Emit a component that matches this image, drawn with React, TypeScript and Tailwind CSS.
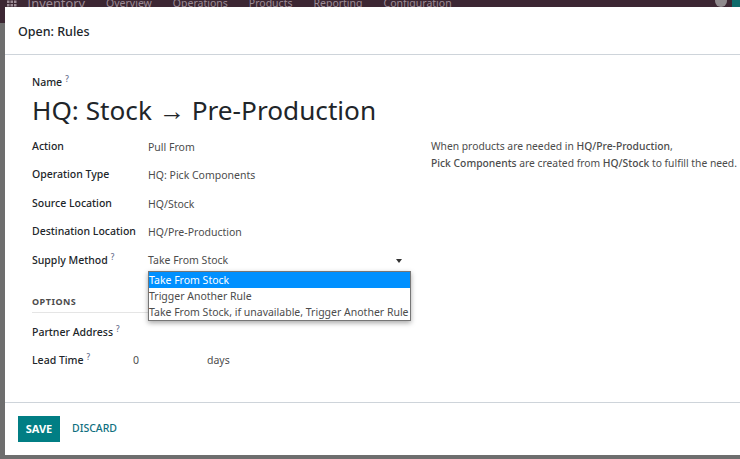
const rows = [
  { label: 'Action', value: 'Pull From', h: 'h-[29px]' },
  { label: 'Operation Type', value: 'HQ: Pick Components', h: 'h-[28px]' },
  { label: 'Source Location', value: 'HQ/Stock', h: 'h-[29px]' },
  { label: 'Destination Location', value: 'HQ/Pre-Production', h: 'h-[28px]' },
];

const options = ['Take From Stock', 'Trigger Another Rule', 'Take From Stock, if unavailable, Trigger Another Rule'];

function Help() {
  return <sup className="ml-[3px] text-[8px] text-[#5f6b8a]">?</sup>;
}

export default function App() {
  return (
    <div className="relative h-[459px] w-[740px] overflow-hidden bg-[#6e6e6e] font-['Noto_Sans',sans-serif] text-[10.5px] text-[#4c4c4c]">
      {/* menu bar behind the dialog */}
      <div className="flex h-[23px] items-start overflow-hidden bg-[#3c2733] text-[#9c8c96]">
        <svg className="ml-[7px] mt-[-3px] shrink-0" width="10" height="10" viewBox="0 0 10 10" fill="#9c8c96">
          <rect x="0" y="0" width="2.5" height="2.5" />
          <rect x="3.5" y="0" width="2.5" height="2.5" />
          <rect x="7" y="0" width="2.5" height="2.5" />
          <rect x="0" y="3.5" width="2.5" height="2.5" />
          <rect x="3.5" y="3.5" width="2.5" height="2.5" />
          <rect x="7" y="3.5" width="2.5" height="2.5" />
          <rect x="0" y="7" width="2.5" height="2.5" />
          <rect x="3.5" y="7" width="2.5" height="2.5" />
          <rect x="7" y="7" width="2.5" height="2.5" />
        </svg>
        <div className="ml-[10px] mt-[-5px] flex gap-[21px] whitespace-nowrap text-[10.5px] leading-[16px]">
          <span className="text-[12.8px]">Inventory</span>
          <span>Overview</span>
          <span>Operations</span>
          <span>Products</span>
          <span>Reporting</span>
          <span>Configuration</span>
        </div>
        <div className="ml-auto flex shrink-0 items-start">
          <span className="mt-[-5px] h-[12px] w-[12px] rounded-full bg-[#8f8a8d]" />
          <span className="ml-[5px] mt-[-5px] h-[12px] w-[8px] bg-[#0f6b6b]" />
        </div>
      </div>

      <div className="absolute left-[5px] top-[7px] flex h-[448px] w-[735px] flex-col bg-white">
        <header className="flex h-[48px] shrink-0 items-center border-b border-[#ced4da] pl-[13px] pt-[3px] text-[12.5px] font-medium text-[#212529]">
          Open: Rules
        </header>

        <main className="flex min-h-0 flex-1 flex-col border-b border-[#ced4da] pl-[27px]">
          <div className="mt-[21px] flex h-[13px] items-center font-medium text-[#212529]">
            Name
            <Help />
          </div>
          <h1 className="mt-[1px] h-[40px] text-[26.2px] leading-[40px] text-[#212529]">HQ: Stock → Pre-Production</h1>

          <div className="mt-[3px] flex">
            <div className="w-[399px] shrink-0">
              {rows.map((r) => (
                <div key={r.label} className={`flex ${r.h} items-center`}>
                  <span className="mt-[-2px] w-[116px] font-medium text-[#212529]">{r.label}</span>
                  <span className="text-[#4c4c4c]">{r.value}</span>
                </div>
              ))}

              <div className="relative flex h-[29px] items-center">
                <span className="mt-[-2px] w-[116px] font-medium text-[#212529]">
                  Supply Method
                  <Help />
                </span>
                <div className="flex h-[21px] w-[257px] items-center justify-between border-b border-[#017e84] pr-[3px]">
                  <span>Take From Stock</span>
                  <span className="h-0 w-0 border-x-[3px] border-t-[4px] border-x-transparent border-t-[#333]" />
                </div>
                <ul className="absolute left-[116px] top-[24px] z-10 w-[263px] whitespace-nowrap border border-[#767676] bg-white text-[#4c4c4c] shadow-[0_2px_5px_rgba(0,0,0,0.35)]">
                  {options.map((o, i) => (
                    <li
                      key={o}
                      className={
                        i === 0
                          ? 'h-[16px] bg-[#0090ff] leading-[16px] text-white'
                          : 'h-[16px] leading-[16px]'
                      }
                    >
                      {o}
                    </li>
                  ))}
                </ul>
              </div>

              <div className="mt-[19px] w-[373px] border-b border-[#e5e5e5] pb-[3px] text-[9px] font-bold tracking-[0.5px] text-[#4c4c4c]">
                OPTIONS
              </div>

              <div className="mt-[12px] flex h-[16px] items-center font-medium text-[#212529]">
                Partner Address
                <Help />
              </div>
              <div className="mt-[12px] flex h-[16px] items-center">
                <span className="w-[101px] font-medium text-[#212529]">
                  Lead Time
                  <Help />
                </span>
                <span className="w-[74px]">0</span>
                <span>days</span>
              </div>
            </div>

            <div className="mt-[5px] whitespace-nowrap text-[10.3px] leading-[17px]">
              <p>
                When products are needed in <b className="font-medium">HQ/Pre-Production</b>,
              </p>
              <p>
                <b className="font-medium">Pick Components</b> are created from{' '}
                <b className="font-medium">HQ/Stock</b> to fulfill the need.
              </p>
            </div>
          </div>
        </main>

        <footer className="flex h-[52px] shrink-0 items-center pl-[13px]">
          <button className="h-[26px] w-[42px] bg-[#017e84] text-[11px] font-bold text-white">SAVE</button>
          <button className="ml-[12px] text-[10.5px] font-medium text-[#0f6f80]">DISCARD</button>
        </footer>
      </div>
    </div>
  );
}
